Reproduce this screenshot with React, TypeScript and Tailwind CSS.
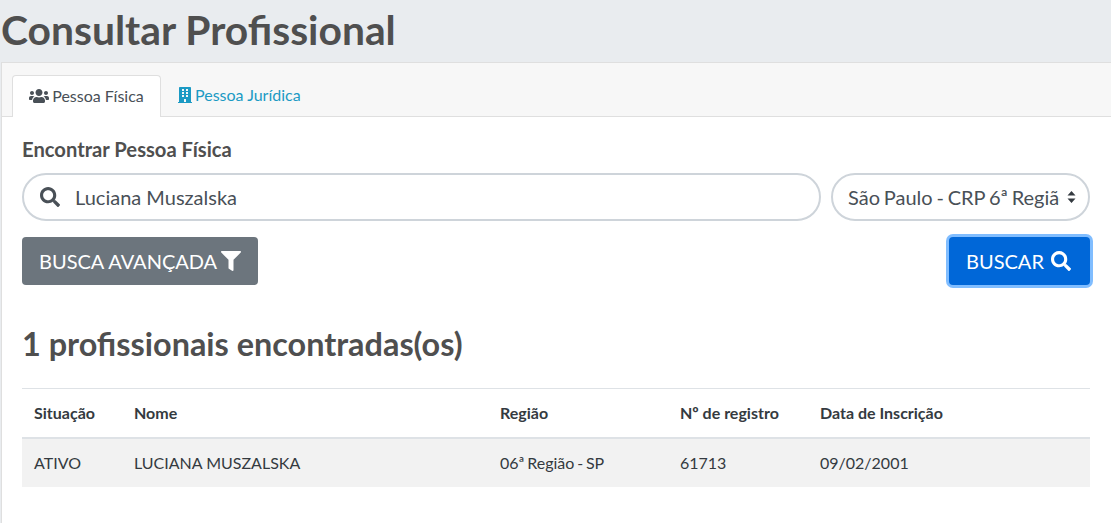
import React from 'react';
import { FaUsers, FaBuilding, FaSearch, FaFilter } from 'react-icons/fa';

const rows = [
  { situacao: 'ATIVO', nome: 'LUCIANA MUSZALSKA', regiao: '06ª Região - SP', registro: '61713', data: '09/02/2001' },
];

const App: React.FC = () => {
  return (
    <div className="h-[523px] overflow-hidden bg-[#e9ecef] font-['Lato',sans-serif] text-[#495057]">
      <h1 className="h-[62px] pl-px text-[40.8px] leading-[60px] font-bold text-[#4f4f4f] whitespace-nowrap">Consultar Profissional</h1>

      <div className="ml-px h-[461px] border-t border-l border-[#dfdfdf] bg-white">
        <div className="flex h-[54px] items-end border-b border-[#dfdfdf] bg-[#f7f7f7] pl-[10px]">
          <div className="-mb-px flex h-[42px] w-[149px] items-center justify-center gap-[3px] rounded-t border border-b-0 border-[#dfdfdf] bg-white pb-px text-base text-[#495057]">
            <FaUsers className="text-[20px]" />
            <span>Pessoa Física</span>
          </div>
          <div className="flex h-[41px] items-center gap-[2px] pb-px pl-4 text-base text-[#1b9ac4]">
            <FaBuilding className="text-base" />
            <span>Pessoa Jurídica</span>
          </div>
        </div>

        <div className="pt-5 pr-[21px] pl-5">
          <h2 className="text-[20.2px] leading-6 font-bold text-[#4f4f4f]">Encontrar Pessoa Física</h2>

          <div className="mt-3 flex gap-[10px]">
            <div className="flex h-[48px] flex-1 items-center rounded-3xl border-2 border-[#ced4da] bg-white pl-4">
              <FaSearch className="text-[20px] text-[#495057]" />
              <span className="ml-[15px] text-[20px]">Luciana Muszalska</span>
            </div>
            <div className="flex h-[48px] w-[259px] items-center justify-between rounded-3xl border-2 border-[#ced4da] bg-white pr-[12px] pl-[15px]">
              <span className="w-[212px] overflow-hidden text-[20px] whitespace-nowrap [word-spacing:-1.3px]">São Paulo - CRP 6ª Região</span>
              <svg width="9" height="14" viewBox="0 0 9 14" className="text-[#343a40]">
                <path d="M4.5 1 8.5 5.5H.5zM4.5 13 .5 8.5h8z" fill="currentColor" />
              </svg>
            </div>
          </div>

          <div className="mt-4 flex items-start justify-between">
            <button className="flex h-[48px] items-center gap-1 rounded bg-[#6c757d] px-[17px] text-[20px] text-white">
              BUSCA AVANÇADA
              <FaFilter className="text-[20px]" />
            </button>
            <button className="flex h-[48px] w-[141px] items-center gap-[7px] rounded bg-[#0067d8] pl-[17px] text-[20px] text-white ring-3 ring-[#80bdff]">
              BUSCAR
              <FaSearch className="text-[20px]" />
            </button>
          </div>

          <h3 className="mt-[35px] text-[32.4px] leading-[48px] font-bold text-[#4f4f4f]">1 profissionais encontradas(os)</h3>

          <table className="mt-5 w-full border-t border-[#dee2e6] text-left text-base text-[#343a40]">
            <thead>
              <tr className="h-[49px] border-b-2 border-[#dee2e6]">
                <th className="w-[100px] pl-3 font-bold">Situação</th>
                <th className="w-[366px] pl-3 font-bold">Nome</th>
                <th className="w-[180px] pl-3 font-bold">Região</th>
                <th className="w-[140px] pl-3 font-bold">Nº de registro</th>
                <th className="pl-3 font-bold">Data de Inscrição</th>
              </tr>
            </thead>
            <tbody>
              {rows.map((r) => (
                <tr key={r.nome} className="h-[49px] bg-[#f2f2f2]">
                  <td className="pl-3">{r.situacao}</td>
                  <td className="pl-3">{r.nome}</td>
                  <td className="pl-3 [word-spacing:-1.3px]">{r.regiao}</td>
                  <td className="pl-3">{r.registro}</td>
                  <td className="pl-3">{r.data}</td>
                </tr>
              ))}
            </tbody>
          </table>
        </div>
      </div>
    </div>
  );
};

export default App;
